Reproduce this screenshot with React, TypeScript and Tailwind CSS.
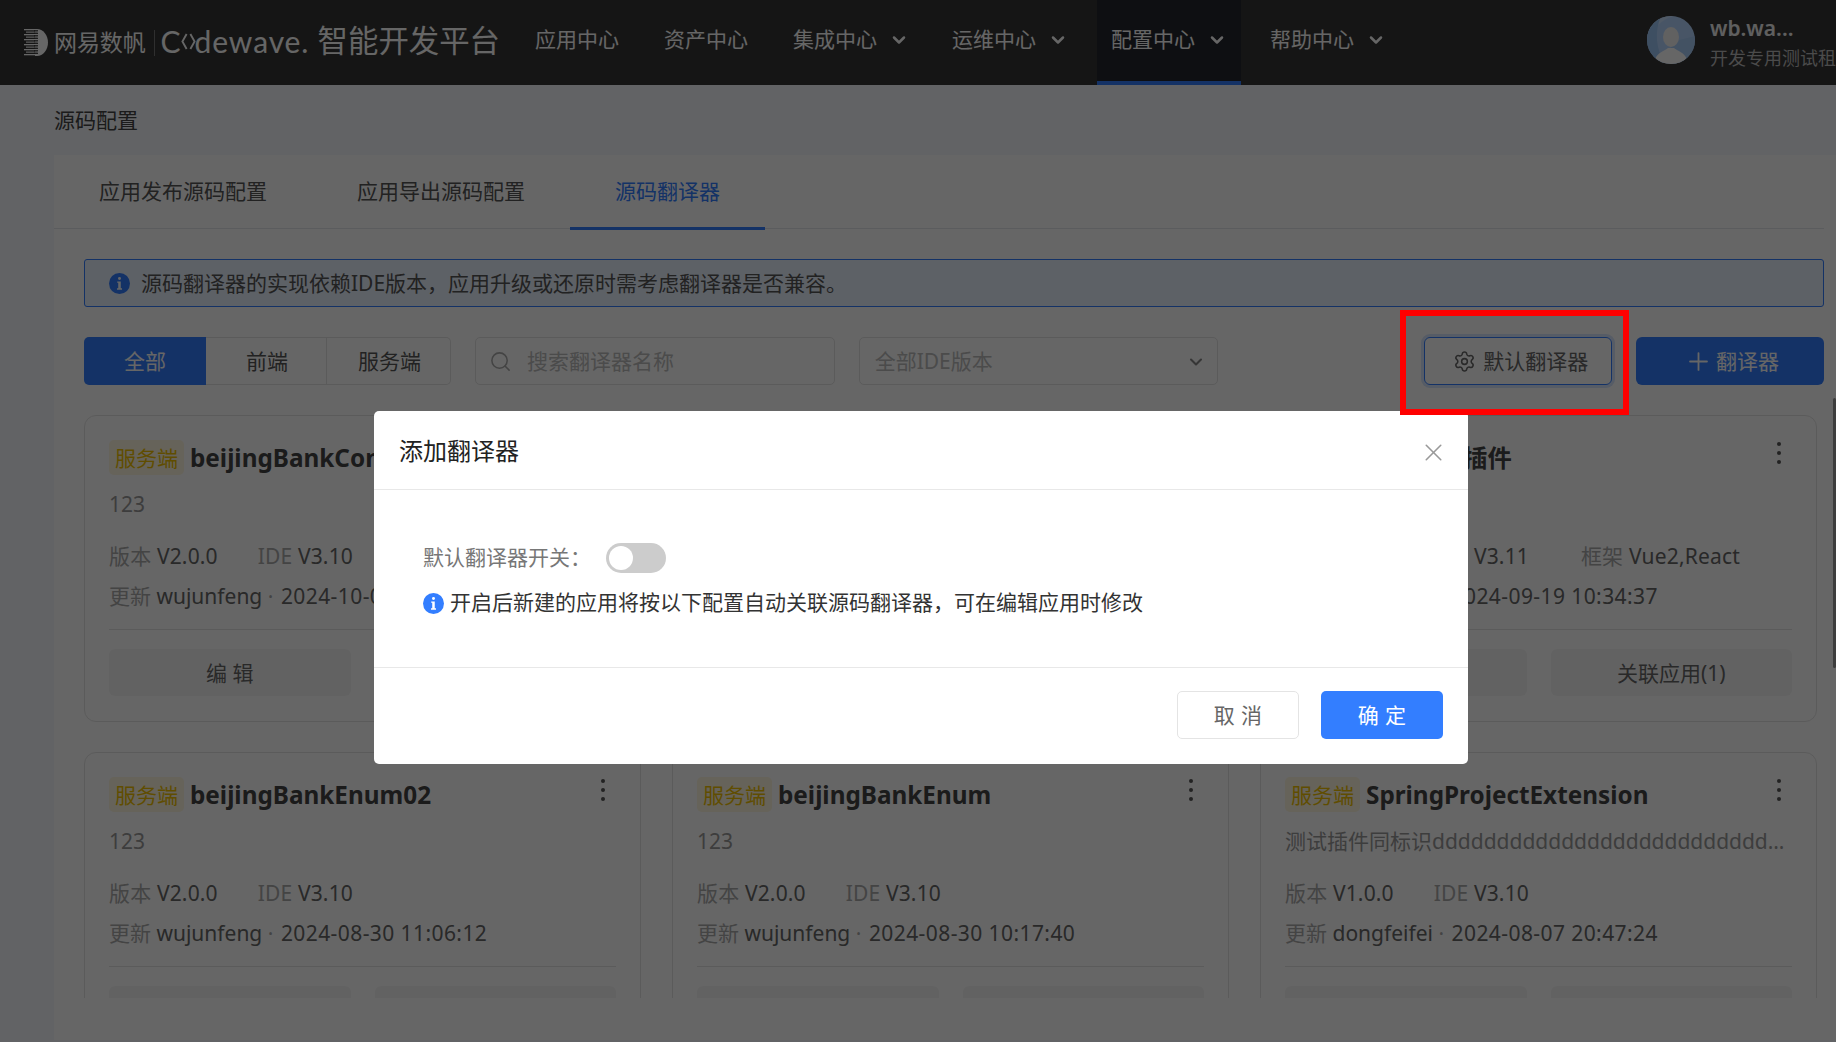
import React from "react";
import { ChevronDown, Plus, Search, Settings, X } from "lucide-react";

function InfoIcon({ className }: { className: string }) {
  return (
    <svg viewBox="0 0 20 20" className={className}>
      <circle cx="10" cy="10" r="10" fill="#337eff" />
      <circle cx="10" cy="5.2" r="1.4" fill="#fff" />
      <path d="M7.8 8h3.4v6.6h1.2v1.4H7.6v-1.4h1.2V9.4h-1z" fill="#fff" />
    </svg>
  );
}

function Logo() {
  return (
    <svg viewBox="0 0 24 27" className="w-[24px] h-[27px] shrink-0">
      <path d="M11 0h2c6 0 11 6 11 13.5S19 27 13 27h-2z" fill="#fff" />
      {Array.from({ length: 11 }).map((_, i) => (
        <rect key={i} x={i % 2 === 0 ? 0 : 2} y={i * 2.5} width={i % 2 === 0 ? 13 : 11} height="1.3" fill={i % 2 === 0 ? "#fff" : "#ddd"} />
      ))}
      {Array.from({ length: 10 }).map((_, i) => (
        <rect key={i} x="10" y={1.2 + i * 2.5} width="4" height="1.2" fill="#353535" />
      ))}
    </svg>
  );
}

function Avatar() {
  return (
    <svg viewBox="0 0 48 48" className="w-[48px] h-[48px] rounded-full shrink-0 -mt-[7px]">
      <rect width="48" height="48" fill="#b5d5ff" />
      <path d="M0 24 Q14 0 30 0H0z" fill="#c8e0ff" />
      <path d="M14 0 Q4 24 18 48H0V0z" fill="#9cc5f5" />
      <path d="M24 48V26L48 20v28z" fill="#a8ccf8" />
      <ellipse cx="24" cy="21" rx="8" ry="10" fill="#f2f2f2" />
      <path d="M8 44c2-8 10-9 13-12h6c3 3 11 4 13 12l-6 4H14z" fill="#fff" />
    </svg>
  );
}

function NavItem({ label, chevron, active }: { label: string; chevron?: boolean; active?: boolean }) {
  return (
    <div
      className={`h-[85px] px-[14px] flex items-center gap-[12px] border-b-4 shrink-0 whitespace-nowrap ${
        active ? "bg-[#24262d] border-[#337eff]" : "border-transparent"
      } ${chevron ? "" : "mr-[2px]"}`}
    >
      <span>{label}</span>
      {chevron && <ChevronDown className="w-[20px] h-[20px] -mt-[1px]" strokeWidth={3} />}
    </div>
  );
}

type CardData = {
  title: string;
  desc: string;
  version: string;
  ide: string;
  frame?: string;
  author: string;
  time: string;
  related?: string;
};

const cards: CardData[] = [
  { title: "beijingBankConnector", desc: "123", version: "V2.0.0", ide: "V3.10", author: "wujunfeng", time: "2024-10-08 14:22:10" },
  { title: "beijingBankConfig", desc: "123", version: "V2.0.0", ide: "V3.10", author: "wujunfeng", time: "2024-09-30 09:12:45" },
  { title: "测试翻译插件", desc: "", version: "V1.0.0", ide: "V3.11", frame: "Vue2,React", author: "dongfeifei", time: "2024-09-19 10:34:37", related: "关联应用(1)" },
  { title: "beijingBankEnum02", desc: "123", version: "V2.0.0", ide: "V3.10", author: "wujunfeng", time: "2024-08-30 11:06:12" },
  { title: "beijingBankEnum", desc: "123", version: "V2.0.0", ide: "V3.10", author: "wujunfeng", time: "2024-08-30 10:17:40" },
  { title: "SpringProjectExtension", desc: "测试插件同标识dddddddddddddddddddddddddddddddddddddddd", version: "V1.0.0", ide: "V3.10", author: "dongfeifei", time: "2024-08-07 20:47:24" },
];

function Card({ c }: { c: CardData }) {
  return (
    <div className="h-[307px] border border-[#e4e4e4] rounded-[12px] bg-white px-[24px] pt-[24px] shrink-0 relative">
      <div className="flex items-center h-[35px]">
        <span className="w-[75px] h-[35px] pt-[2px] rounded-[5px] bg-[#fff8e0] text-[#f0c000] flex items-center justify-center shrink-0">服务端</span>
        <span className="ml-[6px] pt-[2px] text-[24.3px] font-bold text-[#444] whitespace-nowrap">{c.title}</span>
      </div>
      <div className="absolute right-[35px] top-[26px] flex flex-col gap-[5px]">
        <i className="block w-[4px] h-[4px] rounded-full bg-[#555]" />
        <i className="block w-[4px] h-[4px] rounded-full bg-[#555]" />
        <i className="block w-[4px] h-[4px] rounded-full bg-[#555]" />
      </div>
      <div className="mt-[15px] h-[28px] leading-[28px] text-[#999] truncate w-[507px]">{c.desc}</div>
      <div className="mt-[24px] h-[28px] leading-[28px] flex gap-[40px] whitespace-nowrap text-[#666] tracking-[0.15px]">
        <span><span className="text-[#aaa]">版本</span> {c.version}</span>
        <span><span className="text-[#aaa]">IDE</span> {c.ide}</span>
        {c.frame && <span className="ml-[12px]"><span className="text-[#aaa]">框架</span> <span className="tracking-[0.2px]">{c.frame}</span></span>}
      </div>
      <div className="mt-[12px] h-[28px] leading-[28px] whitespace-nowrap text-[#666]">
        <span className="text-[#aaa]">更新</span> {c.author} <span className="text-[#aaa]">·</span> <span className="ml-[2px] tracking-[0.42px]">{c.time}</span>
      </div>
      <div className="mt-[19px] h-px bg-[#e4e4e4]" />
      <div className="mt-[19px] flex gap-[24px]">
        <div className="flex-1 h-[47px] pt-[2px] rounded-[6px] bg-[#f6f6f6] text-[#666] flex items-center justify-center">编 辑</div>
        <div className="flex-1 h-[47px] pt-[2px] rounded-[6px] bg-[#f6f6f6] text-[#666] flex items-center justify-center">{c.related ?? "关联应用(0)"}</div>
      </div>
    </div>
  );
}

export default function App() {
  return (
    <div className="relative w-[1836px] h-[1042px] overflow-hidden bg-[#f5f8fc] text-[21px] text-[#666] font-['Noto_Sans','Noto_Sans_CJK_SC',sans-serif]">
      <header className="h-[85px] bg-[#353535] text-white flex items-center pl-[24px] overflow-hidden">
        <Logo />
        <span className="ml-[6px] text-[23px] whitespace-nowrap tracking-[-0.1px]">网易数帆</span>
        <span className="ml-[8px] w-px h-[26px] bg-[#777]" />
        <span className="ml-[6px] -mt-[3px] flex items-center text-[30px] font-['Lato',sans-serif] whitespace-nowrap leading-none w-[151px] tracking-[0.9px] shrink-0">
          C
          <svg viewBox="0 0 16 22" className="w-[15px] h-[21px] mx-[-1px]" fill="none" stroke="currentColor" strokeWidth="2">
            <path d="M6 3 1.5 11 6 19M10 3l4.500 8L10 19" />
          </svg>
          dewave.
        </span>
        <span className="ml-[6px] -mt-[3px] text-[30.4px] whitespace-nowrap shrink-0">智能开发平台</span>
        <nav className="ml-[21px] flex gap-[15px] shrink-0 -mt-[1px]">
          <NavItem label="应用中心" />
          <NavItem label="资产中心" />
          <NavItem label="集成中心" chevron />
          <NavItem label="运维中心" chevron />
          <NavItem label="配置中心" chevron active />
          <NavItem label="帮助中心" chevron />
        </nav>
        <div className="absolute left-[1647px] top-[16px] flex items-center gap-[15px] shrink-0">
          <Avatar />
          <div className="flex flex-col whitespace-nowrap">
            <span className="text-[21px] font-semibold leading-[28px] text-[#eee] -mt-[2px]">wb.wa...</span>
            <span className="mt-[3px] text-[18px] leading-[26px] text-[#bbb]">开发专用测试租</span>
          </div>
        </div>
      </header>

      <div className="h-[70px] pl-[54px] pt-[1px] flex items-center text-[#444]">源码配置</div>

      <main className="ml-[54px] h-[885px] bg-white pl-[30px] pr-[12px] relative">
        <div className="-ml-[30px] h-[74px] flex border-b border-[#e4e6ec]">
          <div className="px-[45px] h-[75px] -mt-[1px] flex items-center text-[#555] whitespace-nowrap">应用发布源码配置</div>
          <div className="px-[45px] h-[75px] -mt-[1px] flex items-center text-[#555] whitespace-nowrap">应用导出源码配置</div>
          <div className="px-[45px] h-[75px] pt-[2px] flex items-center text-[#337eff] border-b-[3px] border-[#337eff] whitespace-nowrap">源码翻译器</div>
        </div>

        <div className="mt-[30px] h-[48px] pt-[1px] flex items-center border border-[#337eff] rounded-[3px] bg-[#e9f2ff] pl-[24px] text-[#555]">
          <InfoIcon className="w-[21px] h-[21px] shrink-0" />
          <span className="ml-[11px] whitespace-nowrap">源码翻译器的实现依赖IDE版本，应用升级或还原时需考虑翻译器是否兼容。</span>
        </div>

        <div className="mt-[30px] h-[48px] flex items-center">
          <div className="flex h-[48px] rounded-[5px] w-[367px] shrink-0 pt-0">
            <div className="w-[122px] pt-[1px] bg-[#337eff] text-white rounded-l-[5px] flex items-center justify-center">全部</div>
            <div className="w-[121px] pt-[1px] pl-[2px] border-y border-r border-[#e4e4e4] flex items-center justify-center text-[#555]">前端</div>
            <div className="w-[124px] pt-[1px] pl-[2px] border-y border-r border-[#e4e4e4] rounded-r-[5px] flex items-center justify-center text-[#555]">服务端</div>
          </div>
          <div className="ml-[24px] w-[360px] h-[48px] pt-[1px] border border-[#e4e4e4] rounded-[5px] flex items-center pl-[13px] text-[#bbb]">
            <Search className="w-[23px] h-[23px] text-[#aaa]" strokeWidth={1.6} />
            <span className="ml-[15px]">搜索翻译器名称</span>
          </div>
          <div className="ml-[24px] w-[360px] h-[48px] pt-[1px] border border-[#e4e4e4] rounded-[5px] flex items-center justify-between pl-[15px] pr-[11px] text-[#bbb]">
            <span>全部IDE版本</span>
            <ChevronDown className="w-[20px] h-[20px] text-[#888]" strokeWidth={2.5} />
          </div>
          <div className="ml-[206px] w-[188px] h-[48px] pt-[1px] pl-[5px] border border-[#337eff] rounded-[6px] ring-3 ring-[#337eff]/20 flex items-center justify-center gap-[7px] text-[#666]">
            <Settings className="w-[23px] h-[23px]" strokeWidth={1.6} />
            <span>默认翻译器</span>
          </div>
          <div className="ml-[24px] w-[188px] h-[48px] pt-[1px] pl-[3px] bg-[#337eff] rounded-[6px] text-white flex items-center justify-center gap-[3px]">
            <Plus className="w-[29px] h-[29px]" strokeWidth={1.5} />
            <span>翻译器</span>
          </div>
        </div>

        <div className="mt-[30px] h-[583px] w-[1733px] overflow-hidden grid grid-cols-[557px_557px_557px] gap-x-[31px] gap-y-[30px] content-start">
          {cards.map((c, i) => (
            <Card key={i} c={c} />
          ))}
        </div>
      </main>

      <div className="absolute right-0 top-[398px] w-[3px] h-[270px] bg-[#999] rounded-full" />

      <div className="absolute inset-0 bg-black/60 flex items-start justify-start">
        <div className="ml-[374px] mt-[411px] w-[1094px] h-[353px] bg-white rounded-[5px] flex flex-col">
          <div className="h-[79px] border-b border-[#e8e8e8] flex items-center justify-between pl-[25px] pr-[20px] pt-[2px]">
            <span className="text-[24px] text-[#222]">添加翻译器</span>
            <X className="w-[29px] h-[29px] text-[#999] mt-[3px]" strokeWidth={1.3} />
          </div>
          <div className="h-[178px] border-b border-[#e8e8e8] pl-[49px] pt-[53px]">
            <div className="flex items-center h-[30px]">
              <span className="text-[#777] w-[183px] whitespace-nowrap">默认翻译器开关：</span>
              <div className="w-[60px] h-[30px] rounded-full bg-[#ccc] p-[3px]">
                <div className="w-[24px] h-[24px] rounded-full bg-white" />
              </div>
            </div>
            <div className="mt-[15px] flex items-center h-[30px] text-[#333]">
              <InfoIcon className="w-[21px] h-[21px] shrink-0" />
              <span className="ml-[6px] whitespace-nowrap">开启后新建的应用将按以下配置自动关联源码翻译器，可在编辑应用时修改</span>
            </div>
          </div>
          <div className="flex-1 flex justify-end items-start pt-[23px] pr-[25px] gap-[22px]">
            <div className="w-[122px] h-[48px] pt-[1px] border border-[#e4e4e4] rounded-[5px] flex items-center justify-center text-[#666] tracking-[0.4px]">取 消</div>
            <div className="w-[122px] h-[48px] pt-[1px] bg-[#337eff] rounded-[5px] flex items-center justify-center text-white tracking-[0.4px]">确 定</div>
          </div>
        </div>
      </div>

      <div className="absolute left-[1400px] top-[310px] w-[229px] h-[105px] border-[6px] border-[#ff0000]" />
    </div>
  );
}
